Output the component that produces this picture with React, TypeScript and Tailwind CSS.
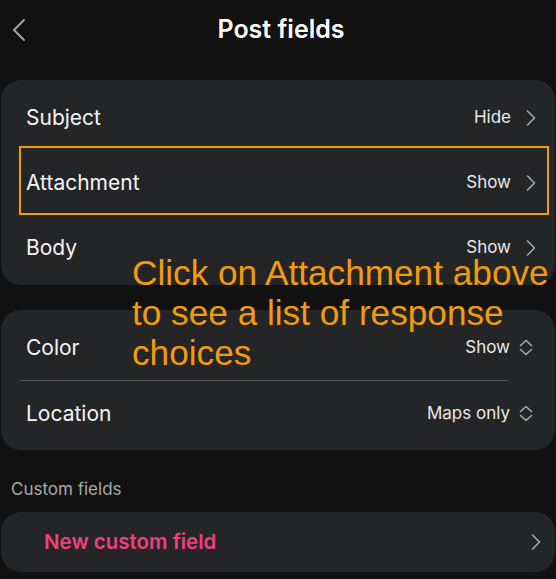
const ChevronRight = ({ className = "" }: { className?: string }) => (
  <svg width="10" height="16" viewBox="0 0 10 16" fill="none" className={className}>
    <path d="M1.5 1 L8.5 8 L1.5 15" stroke="currentColor" strokeWidth="1.6" strokeLinecap="round" strokeLinejoin="round" />
  </svg>
);

const ChevronsUpDown = () => (
  <svg width="14" height="17" viewBox="0 0 14 17" fill="none" className="text-[#a9a9a9]">
    <path d="M1.5 6.5 L7 1.5 L12.5 6.5" stroke="currentColor" strokeWidth="1.6" strokeLinecap="round" strokeLinejoin="round" />
    <path d="M1.5 10.5 L7 15.5 L12.5 10.5" stroke="currentColor" strokeWidth="1.6" strokeLinecap="round" strokeLinejoin="round" />
  </svg>
);

type Field = { label: string; value: string; select?: boolean };

const Row = ({ field }: { field: Field }) => (
  <div className={`h-[65px] flex items-center justify-between pl-[25px] ${field.select ? "pr-[22px]" : "pr-[19px]"}`}>
    <span className="text-[21px] text-[#f4f4f4]">{field.label}</span>
    <div className={`flex items-center text-[17px] text-[#e9e9e9] ${field.select ? "gap-[9px]" : "gap-[15px]"}`}>
      <span>{field.value}</span>
      {field.select ? <ChevronsUpDown /> : <ChevronRight className="text-[#a9a9a9]" />}
    </div>
  </div>
);

export default function App() {
  const postFields: Field[] = [
    { label: "Subject", value: "Hide" },
    { label: "Attachment", value: "Show" },
    { label: "Body", value: "Show" },
  ];

  return (
    <div className="relative w-[556px] h-[579px] overflow-hidden bg-[#111111] font-['Inter',sans-serif]">
      {/* Header */}
      <div className="grid grid-cols-[48px_1fr_42px] items-center h-[60px] mb-[20px]">
        <button className="flex items-center pl-[12px] text-[#a3a3a3]">
          <svg width="14" height="24" viewBox="0 0 14 24" fill="none">
            <path d="M12 2 L2 12 L12 22" stroke="currentColor" strokeWidth="2" strokeLinecap="round" strokeLinejoin="round" />
          </svg>
        </button>
        <h1 className="text-center text-[25px] font-semibold text-white">Post fields</h1>
        <div />
      </div>

      {/* Post fields */}
      <div className="relative mx-[1px] rounded-[20px] bg-[#242527] py-[5px]">
        {postFields.map((f) => (
          <Row key={f.label} field={f} />
        ))}
        <div className="absolute left-[18px] top-[66px] w-[530px] h-[69px] border-2 border-[#f29b0f]" />
      </div>

      <div className="mt-[25px] mx-[1px] rounded-[20px] bg-[#242527] pt-[5px] pb-[4px]">
        <Row field={{ label: "Color", value: "Show", select: true }} />
        <div className="ml-[19px] w-[488px] h-px bg-[#5c5c5c]" />
        <Row field={{ label: "Location", value: "Maps only", select: true }} />
      </div>

      {/* Custom fields */}
      <div className="mt-[27px] pl-[11px] text-[17px] leading-[24px] text-[#a8a8a8]">Custom fields</div>
      <div className="mt-[11px] mx-[1px] h-[60px] rounded-[20px] bg-[#242527] flex items-center justify-between pl-[43px] pr-[14px]">
        <span className="text-[20.5px] font-semibold text-[#f0407d]">New custom field</span>
        <ChevronRight className="text-[#a9a9a9]" />
      </div>

      {/* Hint overlay */}
      <div className="absolute left-[132px] top-[253px] font-['Liberation_Sans',sans-serif] text-[35.2px] leading-[40px] text-[#f29b0f]">
        Click on Attachment above
        <br />
        to see a list of response
        <br />
        choices
      </div>
    </div>
  );
}
